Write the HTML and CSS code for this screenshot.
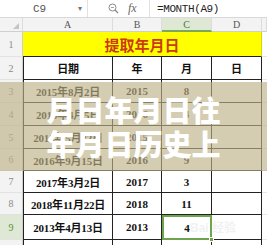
FILE: index.html
```html
<!DOCTYPE html>
<html lang="zh-CN">
<head>
  <meta charset="UTF-8">
  <meta name="viewport" content="width=device-width, initial-scale=1.0">
  <link rel="stylesheet" href="styles.css">
</head>
<body>
  <div class="formula-bar">
    <div class="name-box">
      <span class="cell-ref">C9</span>
      <span class="drop">▾</span>
    </div>
    <div class="fx-tools">
      <svg class="zoom-icon" width="11" height="11" viewBox="0 0 11 11">
        <circle cx="4.5" cy="4.5" r="3.5" fill="none" stroke="#888" stroke-width="1"/>
        <line x1="7" y1="7" x2="10" y2="10" stroke="#888" stroke-width="1.2"/>
        <line x1="3" y1="4.5" x2="6" y2="4.5" stroke="#888" stroke-width="0.8"/>
      </svg>
      <span class="fx">fx</span>
    </div>
    <div class="formula">=MONTH(A9)</div>
  </div>

  <div class="sheet">
    <div class="corner"><span class="tri"></span></div>
    <div class="col-head">A</div>
    <div class="col-head">B</div>
    <div class="col-head active">C</div>
    <div class="col-head">D</div>
    <div class="col-head"></div>

    <div class="row-head">1</div>
    <div class="title">提取年月日</div>
    <div class="spare"></div>

    <div class="row-head">2</div>
    <div class="cell first">日期</div>
    <div class="cell">年</div>
    <div class="cell">月</div>
    <div class="cell">日</div>
    <div class="spare"></div>

    <div class="row-head">3</div>
    <div class="cell first">2015年8月2日</div>
    <div class="cell">2015</div>
    <div class="cell">8</div>
    <div class="cell"></div>
    <div class="spare"></div>

    <div class="row-head">4</div>
    <div class="cell first">2016年4月5日</div>
    <div class="cell">2016</div>
    <div class="cell">4</div>
    <div class="cell"></div>
    <div class="spare"></div>

    <div class="row-head">5</div>
    <div class="cell first">2015年5月22日</div>
    <div class="cell">2015</div>
    <div class="cell">5</div>
    <div class="cell"></div>
    <div class="spare"></div>

    <div class="row-head">6</div>
    <div class="cell first">2016年9月15日</div>
    <div class="cell">2016</div>
    <div class="cell">9</div>
    <div class="cell"></div>
    <div class="spare"></div>

    <div class="row-head">7</div>
    <div class="cell first">2017年3月2日</div>
    <div class="cell">2017</div>
    <div class="cell">3</div>
    <div class="cell"></div>
    <div class="spare"></div>

    <div class="row-head">8</div>
    <div class="cell first">2018年11月22日</div>
    <div class="cell">2018</div>
    <div class="cell">11</div>
    <div class="cell"></div>
    <div class="spare"></div>

    <div class="row-head active">9</div>
    <div class="cell first">2013年4月13日</div>
    <div class="cell">2013</div>
    <div class="cell selected">4<span class="handle"></span></div>
    <div class="cell"></div>
    <div class="spare"></div>

    <div class="row-head">10</div>
    <div class="cell first"></div>
    <div class="cell"></div>
    <div class="cell"></div>
    <div class="cell"></div>
    <div class="spare"></div>
  </div>

  <div class="watermark">Bai 经验</div>

  <div class="overlay">
    <p class="overlay-text">月日年月日往<br>年月日历史上</p>
  </div>
</body>
</html>
```

FILE: styles.css
```css
* {
  margin: 0;
  padding: 0;
  box-sizing: border-box;
}

html, body {
  width: 267px;
  height: 245px;
  overflow: hidden;
  background: #fff;
}

body {
  position: relative;
  font-family: "Liberation Serif", "Noto Sans CJK SC", serif;
}

.formula-bar {
  height: 18px;
  display: flex;
  align-items: center;
  background: #fff;
  border-bottom: 1px solid #d9d9d9;
  font-size: 11px;
  color: #444;
}

.name-box {
  width: 88px;
  height: 100%;
  display: flex;
  align-items: center;
  border-right: 1px solid #e2e2e2;
}

.cell-ref {
  margin-left: 33px;
  font-family: "Liberation Mono", monospace;
  font-size: 11px;
  color: #555;
}

.drop {
  margin-left: auto;
  margin-right: 5px;
  font-size: 8px;
  color: #777;
}

.fx-tools {
  width: 62px;
  height: 100%;
  display: flex;
  align-items: center;
  border-right: 1px solid #e2e2e2;
}

.zoom-icon {
  margin-left: 20px;
}

.fx {
  margin-left: 9px;
  font-style: italic;
  font-size: 12px;
  color: #666;
}

.formula {
  padding-left: 7px;
  font-family: "Liberation Mono", monospace;
  font-size: 11px;
  letter-spacing: -0.4px;
  color: #222;
}

.sheet {
  display: grid;
  grid-template-columns: 23px 90px 49px 50px 50px 1fr;
  grid-template-rows: 14px 25px 23px 23px 23px 23px 22px 22px 22px 25px 23px;
}

.corner,
.col-head {
  background: #f3f3f3;
  border-bottom: 1px solid #cfcfcf;
  border-right: 1px solid #dcdcdc;
  font-size: 10px;
  color: #555;
  display: flex;
  align-items: center;
  justify-content: center;
}

.corner {
  position: relative;
}

.tri {
  position: absolute;
  right: 3px;
  bottom: 2px;
  width: 0;
  height: 0;
  border-left: 6px solid transparent;
  border-bottom: 6px solid #c4c4c4;
}

.col-head.active {
  background: #dfe8d4;
  border-bottom: 2px solid #79a85a;
  color: #4d7a33;
}

.row-head {
  background: #f3f3f3;
  border-right: 1px solid #cfcfcf;
  border-bottom: 1px solid #e2e2e2;
  font-size: 10px;
  color: #8a8a8a;
  display: flex;
  align-items: center;
  justify-content: center;
}

.row-head.active {
  background: #dfe8d4;
  color: #5d8f3b;
}

.title {
  grid-column: span 4;
  background: #ffff00;
  border-bottom: 1px solid #222;
  border-right: 1px solid #d8d800;
  color: #cc3a12;
  font-family: "Noto Sans CJK SC", sans-serif;
  font-weight: 700;
  font-size: 15px;
  display: flex;
  align-items: center;
  justify-content: center;
}

.cell {
  border-right: 1px solid #222;
  border-bottom: 1px solid #222;
  font-weight: 700;
  font-size: 11px;
  color: #111;
  display: flex;
  align-items: center;
  justify-content: center;
}

.cell.first {
  border-left: 1px solid #222;
  letter-spacing: -0.2px;
}

.cell.selected {
  position: relative;
  border: 2px solid #6fa34d;
}

.handle {
  position: absolute;
  right: -4px;
  bottom: -4px;
  width: 5px;
  height: 5px;
  background: #6fa34d;
  border: 1px solid #fff;
}

.spare {
  border-bottom: 1px solid #e6e6e6;
}

.watermark {
  position: absolute;
  left: 190px;
  top: 218px;
  font-family: "Liberation Sans", "Noto Sans CJK SC", sans-serif;
  font-size: 12px;
  font-weight: 700;
  color: rgba(215, 215, 215, 0.35);
}

.overlay {
  position: absolute;
  left: 0;
  top: 82px;
  width: 267px;
  height: 89px;
  background: rgba(190, 178, 135, 0.65);
  display: flex;
  align-items: center;
  justify-content: center;
}

.overlay-text {
  margin-top: -2px;
  font-family: "Noto Sans CJK SC", sans-serif;
  font-weight: 900;
  font-size: 29px;
  line-height: 34px;
  color: #fff;
  text-align: center;
}
```
